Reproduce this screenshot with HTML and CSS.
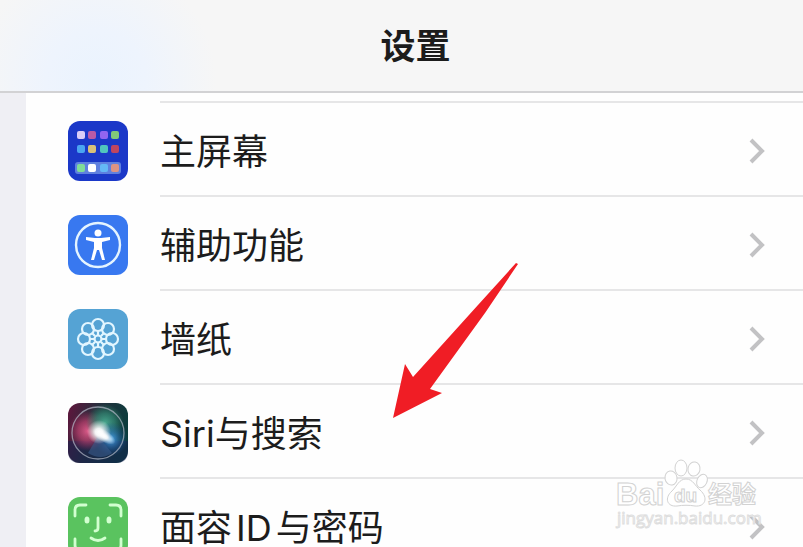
FILE: index.html
```
<!DOCTYPE html>
<html lang="zh-CN">
<head>
    <meta charset="UTF-8">
    <title>设置</title>
    <link rel="stylesheet" href="styles.css">
</head>
<body>
    <header class="title-bar">
        <h1>设置</h1>
    </header>

    <main class="settings">
        <nav class="settings-list">
            <!-- Home screen -->
            <a class="row" href="#home-screen">
                <svg class="row-icon" viewBox="0 0 60 60">
                    <rect width="60" height="60" rx="12" fill="#1b38c8" />
                    <rect x="7" y="41" width="46" height="12" rx="3" fill="#5f80df" />
                    <rect x="9" y="10" width="8" height="8" rx="2" fill="#d9cdf8" />
                    <rect x="20" y="10" width="8" height="8" rx="2" fill="#b95ba6" />
                    <rect x="32" y="10" width="8" height="8" rx="2" fill="#9265f0" />
                    <rect x="43" y="10" width="8" height="8" rx="2" fill="#82c879" />
                    <rect x="9" y="24" width="8" height="8" rx="2" fill="#4aa5f2" />
                    <rect x="20" y="24" width="8" height="8" rx="2" fill="#d9c179" />
                    <rect x="32" y="24" width="8" height="8" rx="2" fill="#50c6bd" />
                    <rect x="43" y="24" width="8" height="8" rx="2" fill="#bf4660" />
                    <rect x="9" y="43" width="8" height="8" rx="2" fill="#80dc98" />
                    <rect x="20" y="43" width="8" height="8" rx="2" fill="#ffffff" />
                    <rect x="32" y="43" width="8" height="8" rx="2" fill="#64b8f6" />
                    <rect x="43" y="43" width="8" height="8" rx="2" fill="#dd9484" />
                </svg>
                <span class="row-body">
                    <span class="row-label">主屏幕</span>
                    <svg class="chevron" viewBox="0 0 16 28"><path d="M2 3 L13 14 L2 25" /></svg>
                </span>
            </a>

            <!-- Accessibility -->
            <a class="row" href="#accessibility">
                <svg class="row-icon" viewBox="0 0 60 60">
                    <rect width="60" height="60" rx="12" fill="#3878f0" />
                    <circle cx="30" cy="30" r="22" fill="none" stroke="#e4f4ff" stroke-width="2.4" />
                    <circle cx="30" cy="18" r="3.5" fill="#fff" />
                    <path d="M18 22 L27 23 H33 L42 22 V25 L34 27 V33 L37 45 H34 L31 35 H29 L26 45 H23 L26 33 V27 L18 25 Z" fill="#fff" />
                </svg>
                <span class="row-body">
                    <span class="row-label">辅助功能</span>
                    <svg class="chevron" viewBox="0 0 16 28"><path d="M2 3 L13 14 L2 25" /></svg>
                </span>
            </a>

            <!-- Wallpaper -->
            <a class="row" href="#wallpaper">
                <svg class="row-icon" viewBox="0 0 60 60">
                    <rect width="60" height="60" rx="12" fill="#55a3d4" />
                    <g fill="none" stroke="#e2f6ff" stroke-width="2.2">
                        <circle cx="30" cy="16" r="6" />
                        <circle cx="40" cy="20" r="6" />
                        <circle cx="44" cy="30" r="6" />
                        <circle cx="40" cy="40" r="6" />
                        <circle cx="30" cy="44" r="6" />
                        <circle cx="20" cy="40" r="6" />
                        <circle cx="16" cy="30" r="6" />
                        <circle cx="20" cy="20" r="6" />
                        <circle cx="30" cy="30" r="3.5" />
                        <path d="M30 22 V26 M30 34 V38 M22 30 H26 M34 30 H38 M24 24 L27 27 M36 24 L33 27 M24 36 L27 33 M36 36 L33 33" />
                    </g>
                </svg>
                <span class="row-body">
                    <span class="row-label">墙纸</span>
                    <svg class="chevron" viewBox="0 0 16 28"><path d="M2 3 L13 14 L2 25" /></svg>
                </span>
            </a>

            <!-- Siri -->
            <a class="row" href="#siri">
                <svg class="row-icon" viewBox="0 0 60 60">
                    <defs>
                        <linearGradient id="siri-base" x1="0" y1="0" x2="1" y2="0.3">
                            <stop offset="0" stop-color="#61143c" />
                            <stop offset="0.5" stop-color="#24303d" />
                            <stop offset="1" stop-color="#0c3c3c" />
                        </linearGradient>
                        <radialGradient id="siri-pink">
                            <stop offset="0" stop-color="#dc5c8a" />
                            <stop offset="0.5" stop-color="#c0406f" stop-opacity="0.7" />
                            <stop offset="1" stop-color="#b02a5c" stop-opacity="0" />
                        </radialGradient>
                        <radialGradient id="siri-green">
                            <stop offset="0" stop-color="#4aa88f" />
                            <stop offset="0.5" stop-color="#358f78" stop-opacity="0.7" />
                            <stop offset="1" stop-color="#2a8a68" stop-opacity="0" />
                        </radialGradient>
                        <radialGradient id="siri-blue">
                            <stop offset="0" stop-color="#4aa6e8" />
                            <stop offset="1" stop-color="#154b98" stop-opacity="0" />
                        </radialGradient>
                        <radialGradient id="siri-glow">
                            <stop offset="0" stop-color="#fff" />
                            <stop offset="0.3" stop-color="#fff" stop-opacity="0.9" />
                            <stop offset="1" stop-color="#fff" stop-opacity="0" />
                        </radialGradient>
                    </defs>
                    <rect width="60" height="60" rx="12" fill="url(#siri-base)" />
                    <path d="M0 38 H60 V48 Q60 60 48 60 H12 Q0 60 0 48 Z" fill="#162052" opacity="0.5" />
                    <circle cx="20" cy="28" r="20" fill="url(#siri-pink)" />
                    <circle cx="37" cy="20" r="19" fill="url(#siri-green)" />
                    <circle cx="43" cy="36" r="17" fill="url(#siri-blue)" />
                    <path d="M30 33 L20 50 Q33 58 44 50 Z" fill="#3a5c8c" opacity="0.6" />
                    <circle cx="31" cy="29" r="12" fill="url(#siri-glow)" />
                    <ellipse cx="36" cy="33" rx="13" ry="6" transform="rotate(32 36 33)" fill="url(#siri-glow)" />
                    <circle cx="30" cy="30" r="26" fill="none" stroke="#b4b9c8" stroke-width="1.3" opacity="0.7" />
                </svg>
                <span class="row-body">
                    <span class="row-label">Siri与搜索</span>
                    <svg class="chevron" viewBox="0 0 16 28"><path d="M2 3 L13 14 L2 25" /></svg>
                </span>
            </a>

            <!-- Face ID -->
            <a class="row" href="#face-id">
                <svg class="row-icon" viewBox="0 0 60 60">
                    <rect width="60" height="60" rx="12" fill="#5ac35f" />
                    <g fill="none" stroke="#d2ffd0" stroke-width="2.8" stroke-linecap="round">
                        <path d="M7 19 V13 Q7 8 12 8 H18 M42 8 H48 Q53 8 53 13 V19 M7 42 V48 Q7 53 12 53 H18 M42 53 H48 Q53 53 53 48 V42" />
                        <path d="M30 21 V31 Q30 34 27 34" />
                        <path d="M23 41 Q30 46 37 41" />
                    </g>
                    <ellipse cx="19" cy="23" rx="2.5" ry="3.5" fill="#d2ffd0" />
                    <ellipse cx="41" cy="23" rx="2.5" ry="3.5" fill="#d2ffd0" />
                </svg>
                <span class="row-body">
                    <span class="row-label">面容<span class="latin">ID</span>与密码</span>
                    <svg class="chevron" viewBox="0 0 16 28"><path d="M2 3 L13 14 L2 25" /></svg>
                </span>
            </a>
        </nav>

        <svg class="arrow" viewBox="0 0 126 156">
            <path d="M0 155 L12 101 L20 114 L85 42 L123 0 L125 1 L92 50 L37 126 L49 130 Z" />
        </svg>
    </main>

    <!-- Watermark -->
    <svg class="watermark" viewBox="0 0 150 72">
        <g class="outline">
            <text class="brand" x="1" y="45">Bai</text>
            <ellipse cx="56" cy="18" rx="6" ry="7" transform="rotate(-10 56 18)" />
            <ellipse cx="66" cy="8" rx="6" ry="8" />
            <ellipse cx="79" cy="9" rx="6" ry="7" transform="rotate(10 79 9)" />
            <ellipse cx="87" cy="21" rx="5" ry="7" transform="rotate(25 87 21)" />
            <path d="M71 19 C78 19 80 26 85 30 C94 38 90 47 80 46 C74 45 68 45 62 46 C52 47 49 38 57 31 C62 26 64 19 71 19 Z" />
            <text class="du" x="59" y="42">du</text>
            <text class="cn" x="93" y="43">经验</text>
            <text class="address" x="2" y="64">jingyan.baidu.com</text>
        </g>
    </svg>
</body>
</html>
```

FILE: styles.css
```
* {
    box-sizing: border-box;
}

body {
    margin: 0;
    height: 100vh;
    overflow: hidden;
    position: relative;
    background: #efeff4;
    color: #1c1c1c;
    font-family: Inter, "Noto Sans CJK SC", sans-serif;
}

.title-bar {
    height: 93px;
    padding-left: 28px;
    display: flex;
    align-items: center;
    justify-content: center;
    border-bottom: 2px solid #d2d2d4;
    background: radial-gradient(circle at 96px 80px, #eaf3fe, #eef4fd 50px, #f6f6f6 120px);
}

h1 {
    margin: 0;
    font-size: 35px;
    line-height: 40px;
    font-weight: 700;
}

.settings {
    position: relative;
    margin-left: 26px;
    padding-top: 8px;
    background: #fefefe;
}

.row {
    display: flex;
    align-items: center;
    gap: 32px;
    height: 94px;
    padding-left: 42px;
    color: inherit;
    text-decoration: none;
}

.row-icon {
    flex: none;
    width: 60px;
    height: 60px;
    margin-top: 6px;
}

.row-body {
    flex: 1;
    align-self: stretch;
    display: flex;
    align-items: center;
    justify-content: space-between;
    padding: 4px 38px 0 0;
    border-top: 2px solid #e6e6e7;
}

.row-label {
    padding-top: 2px;
    font-size: 36px;
    line-height: 48px;
}

.latin {
    margin: 0 4px;
}

.chevron {
    width: 16px;
    height: 28px;
    fill: none;
    stroke: #c2c2c4;
    stroke-width: 4px;
}

.arrow {
    position: absolute;
    left: 367px;
    top: 170px;
    width: 126px;
    height: 156px;
    fill: #f01d25;
}

.watermark {
    position: absolute;
    right: 38px;
    bottom: 15px;
    width: 150px;
    height: 72px;
    overflow: visible;
}

.outline {
    fill: #fff;
    stroke: #d2d2d2;
    stroke-width: 1px;
}

.brand {
    font: 700 31px "Liberation Sans", sans-serif;
}

.du {
    font: 700 19px "Liberation Sans", sans-serif;
}

.cn {
    font: 700 24px "Noto Sans CJK SC", sans-serif;
}

.address {
    font: 17px "Open Sans", sans-serif;
    stroke: #dedede;
}
```
